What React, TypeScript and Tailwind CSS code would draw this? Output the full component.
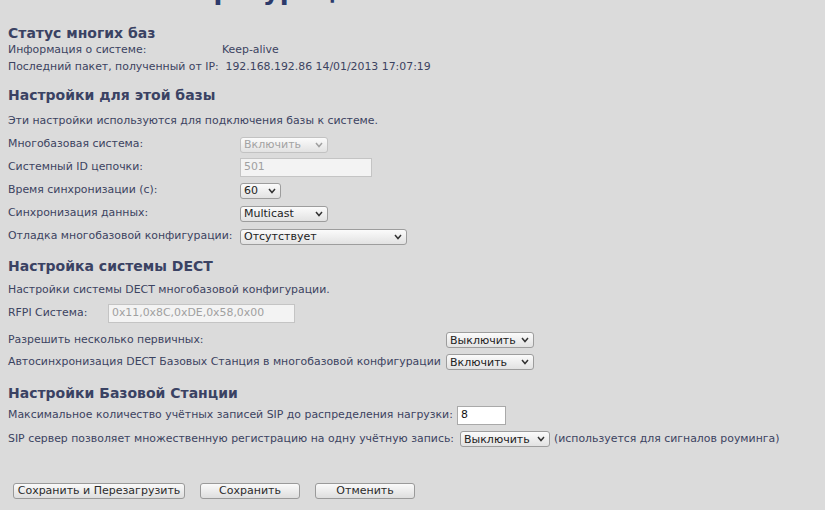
import React from 'react';

const font = { fontFamily: '"DejaVu Sans", "Noto Sans", sans-serif' };

function Chevron({ muted }: { muted?: boolean }) {
  return (
    <svg width="8" height="6" viewBox="0 0 8 6" className="shrink-0">
      <polyline points="1,1 4,4.5 7,1" fill="none" stroke={muted ? '#a0a0a0' : '#333'} strokeWidth="1.5" />
    </svg>
  );
}

function Select({ value, w, disabled }: { value: string; w: string; disabled?: boolean }) {
  return (
    <div
      className={`${w} h-[16px] flex items-center justify-between pl-[3px] pr-[4px] rounded-[3px] border bg-gradient-to-b from-[#fbfbfb] to-[#e2e2e2] ${
        disabled ? 'border-[#c2c2c2] text-[#a3a3a3]' : 'border-[#9d9d9d] text-[#222]'
      }`}
    >
      <span className="leading-none text-[11px]">{value}</span>
      <Chevron muted={disabled} />
    </div>
  );
}

function TextBox({ value, w, muted }: { value: string; w: string; muted?: boolean }) {
  return (
    <div
      className={`${w} h-[19px] flex items-center pl-[3px] border ${
        muted ? 'border-[#c4c4c4] bg-[#f3f3f3] text-[#a0a0a0]' : 'border-[#a9a9a9] bg-white text-[#111]'
      }`}
    >
      {value}
    </div>
  );
}

function Button({ label, w }: { label: string; w: string }) {
  return (
    <div className={`${w} h-[16px] flex items-center justify-center rounded-[3px] border border-[#9a9a9a] bg-gradient-to-b from-[#fafafa] to-[#dedede] text-[#2b2b2b] text-[11px] whitespace-nowrap`}>
      {label}
    </div>
  );
}

function Heading({ children, mt }: { children: React.ReactNode; mt: string }) {
  return (
    <h2 className={`${mt} h-[16px] flex items-center text-[14px] font-bold text-[#3a4263] whitespace-nowrap`}>
      {children}
    </h2>
  );
}

function Row({ label, children, h = 'h-[23px]' }: { label: string; children: React.ReactNode; h?: string }) {
  return (
    <div className={`${h} grid grid-cols-[232px_1fr] items-center`}>
      <span className="whitespace-nowrap">{label}</span>
      <div className="flex items-center">{children}</div>
    </div>
  );
}

export default function App() {
  return (
    <div className="min-h-[510px] w-[825px] bg-[#dbdbdb] text-[10.9px] text-[#3b4361] overflow-hidden" style={font}>
      <div className="px-2">
        {/* page title, scrolled mostly out of view */}
        <div className="h-[5px] overflow-hidden">
          <h1 className="-mt-[25px] pl-[140px] text-[26px] leading-[30px] font-bold text-[#2c3a6b] whitespace-nowrap">
            Конфигурация
          </h1>
        </div>

        <Heading mt="mt-[20px]">Статус многих баз</Heading>
        <div className="mt-[1px] grid grid-cols-[214px_1fr]">
          <span className="h-[17px] flex items-center">Информация о системе:</span>
          <span className="h-[17px] flex items-center">Keep-alive</span>
          <span className="h-[17px] flex items-center whitespace-nowrap">Последний пакет, полученный от IP:</span>
          <span className="h-[17px] flex items-center whitespace-nowrap">&nbsp;192.168.192.86 14/01/2013 17:07:19</span>
        </div>

        <Heading mt="mt-[11px]">Настройки для этой базы</Heading>
        <div className="mt-[9px] h-[18px] flex items-center">Эти настройки используются для подключения базы к системе.</div>
        <div className="mt-[3px]">
          <Row label="Многобазовая система:">
            <Select value="Включить" w="w-[88px]" disabled />
          </Row>
          <Row label="Системный ID цепочки:">
            <TextBox value="501" w="w-[132px]" muted />
          </Row>
          <Row label="Время синхронизации (с):">
            <Select value="60" w="w-[41px]" />
          </Row>
          <Row label="Синхронизация данных:">
            <Select value="Multicast" w="w-[88px]" />
          </Row>
          <Row label="Отладка многобазовой конфигурации:">
            <Select value="Отсутствует" w="w-[167px]" />
          </Row>
        </div>

        <Heading mt="mt-[10px]">Настройка системы DECT</Heading>
        <div className="mt-[7px] h-[18px] flex items-center">Настройки системы DECT многобазовой конфигурации.</div>
        <div className="mt-[3px] h-[22px] flex items-center">
          <span className="w-[100px]">RFPI Система:</span>
          <TextBox value="0x11,0x8C,0xDE,0x58,0x00" w="w-[187px]" muted />
        </div>
        <div className="mt-[5px] h-[22px] grid grid-cols-[438px_1fr] items-center">
          <span>Разрешить несколько первичных:</span>
          <Select value="Выключить" w="w-[88px]" />
        </div>
        <div className="h-[22px] grid grid-cols-[438px_1fr] items-center">
          <span className="whitespace-nowrap">Автосинхронизация DECT Базовых Станция в многобазовой конфигурации</span>
          <Select value="Включить" w="w-[88px]" />
        </div>

        <Heading mt="mt-[12px]">Настройки Базовой Станции</Heading>
        <div className="mt-[3px] h-[22px] flex items-center gap-[4px] whitespace-nowrap">
          <span>Максимальное количество учётных записей SIP до распределения нагрузки:</span>
          <TextBox value="8" w="w-[49px]" />
        </div>
        <div className="mt-[2px] h-[22px] flex items-center whitespace-nowrap">
          <span>SIP сервер позволяет множественную регистрацию на одну учётную запись:</span>
          <div className="ml-[6px] mr-[4px]">
            <Select value="Выключить" w="w-[90px]" />
          </div>
          <span>(используется для сигналов роуминга)</span>
        </div>

        <div className="mt-[33px] pl-[5px] flex items-center gap-[15px]">
          <Button label="Сохранить и Перезагрузить" w="w-[172px]" />
          <Button label="Сохранить" w="w-[100px]" />
          <Button label="Отменить" w="w-[100px]" />
        </div>
      </div>
    </div>
  );
}
